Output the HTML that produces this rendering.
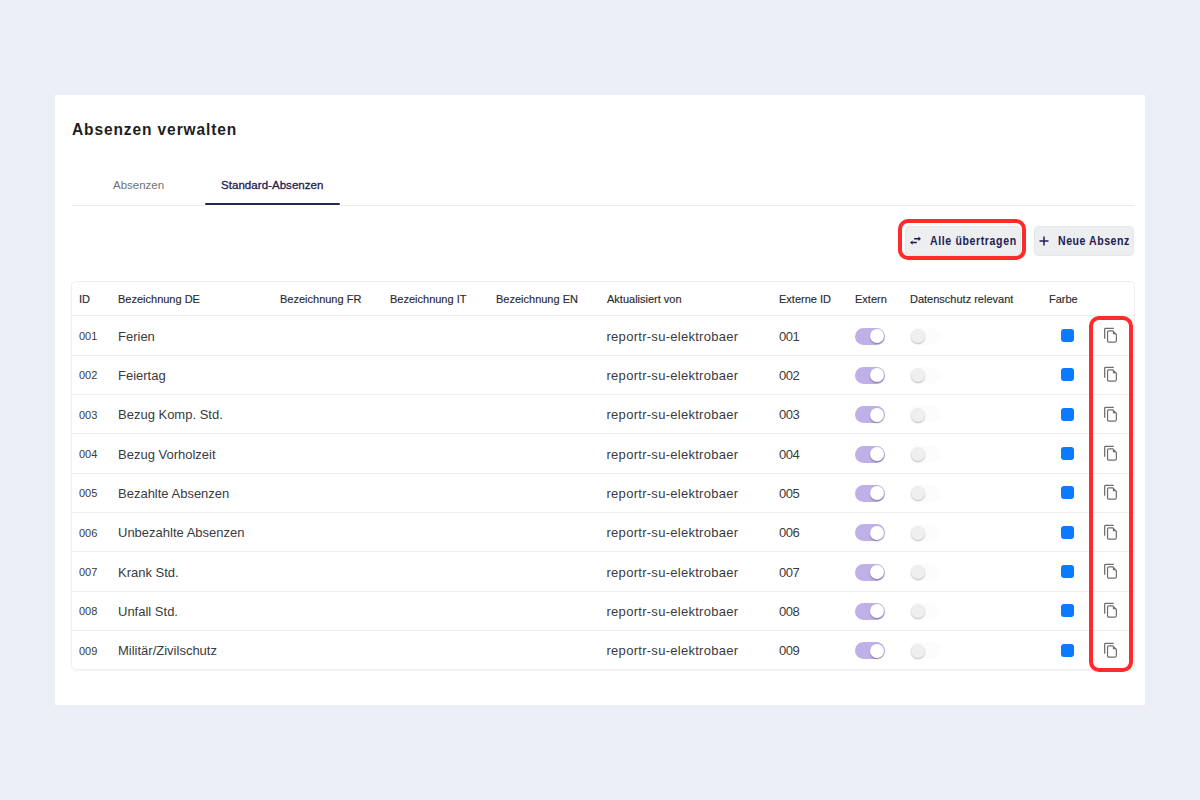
<!DOCTYPE html>
<html>
<head>
<meta charset="utf-8">
<style>
html,body{margin:0;padding:0;}
body{width:1200px;height:800px;background:#ECEFF7;font-family:"Liberation Sans",sans-serif;position:relative;overflow:hidden;}
.abs{position:absolute;}
.card{position:absolute;left:55px;top:95px;width:1090px;height:610px;background:#fff;}
.title{position:absolute;left:72px;top:118.5px;font-size:16.5px;font-weight:bold;color:#1d1e22;letter-spacing:0.95px;transform:scaleX(0.94);transform-origin:0 0;white-space:nowrap;line-height:20px;}
.tab{position:absolute;top:177px;font-size:11.5px;line-height:16px;white-space:nowrap;}
.tab1{left:113px;color:#707176;}
.tab2{left:221px;color:#1f2150;font-weight:normal;-webkit-text-stroke:0.3px #1f2150;letter-spacing:0.05px;}
.underline{position:absolute;left:205px;top:203px;width:134.5px;height:2px;background:#24274f;border-radius:1px;}
.divider{position:absolute;left:72px;top:205px;width:1063px;height:1px;background:#e9eaee;}
.btn{position:absolute;top:226px;height:30px;background:#edeef0;border-radius:5px;box-shadow:inset 0 0 0 1px #e4e6ea;}
.btntxt{position:absolute;top:7px;font-size:12px;font-weight:bold;color:#1e2150;line-height:16px;white-space:nowrap;letter-spacing:0.7px;transform:scaleX(0.88);transform-origin:0 0;}
.red{position:absolute;border:4.2px solid #ff2b2b;box-sizing:border-box;}
.tbl{position:absolute;left:71px;top:281px;width:1064px;height:389px;border:1px solid #efeff0;border-radius:5px;box-sizing:border-box;box-shadow:0 1px 1px rgba(0,0,0,0.04);}
.hline{position:absolute;left:72px;width:1062px;height:1px;background:#efeff0;}
.th{position:absolute;top:292px;font-size:11px;line-height:14px;color:#2a2b30;white-space:nowrap;-webkit-text-stroke:0.15px #2a2b30;}
.td{position:absolute;font-size:13px;line-height:16px;color:#3a3b40;white-space:nowrap;}
.tid{position:absolute;font-size:11px;line-height:14px;color:#3a3b44;white-space:nowrap;}
.tog{position:absolute;left:855px;width:30px;height:17px;border-radius:9px;background:#c0b0e8;}
.tog::after{content:"";position:absolute;left:15px;top:1.6px;width:13.8px;height:13.8px;border-radius:50%;background:#fff;box-shadow:0 1px 1.5px rgba(0,0,0,0.35);}
.togoff{position:absolute;left:910px;width:30px;height:17px;border-radius:9px;background:#fcfcfc;}
.togoff::after{content:"";position:absolute;left:1px;top:1.6px;width:13.8px;height:13.8px;border-radius:50%;background:#efefef;box-shadow:0 1px 1.5px rgba(0,0,0,0.25);}
.sq{position:absolute;left:1060.6px;width:13.2px;height:13.2px;border-radius:3px;background:#0a7bff;}
.cp{position:absolute;left:1100px;width:22px;height:22px;}
</style>
</head>
<body>
<div class="card"></div>
<div class="title">Absenzen verwalten</div>
<div class="tab tab1">Absenzen</div>
<div class="tab tab2">Standard-Absenzen</div>
<div class="underline"></div>
<div class="divider"></div>
<div class="abs" style="left:205px;top:205px;width:134.5px;height:1px;background:#fff"></div>

<div class="btn" style="left:905px;width:116px;">
  <svg class="abs" style="left:0;top:0" width="30" height="30" viewBox="0 0 30 30"><path d="M9.1 12.75H14M7.3 16.57H11.8" stroke="#1a1d4e" stroke-width="1.4" fill="none"/><path d="M13.4 10.55L15.95 12.75L13.4 14.95Z M7.6 14.4L5.05 16.57L7.6 18.75Z" fill="#1a1d4e"/></svg>
  <div class="btntxt" style="left:25px">Alle übertragen</div>
</div>
<div class="btn" style="left:1034px;width:100px;overflow:hidden;">
  <svg class="abs" style="left:5px;top:10px" width="10" height="10" viewBox="0 0 10 10"><path d="M5 0.5V9.5M0.5 5H9.5" stroke="#1e2150" stroke-width="1.5" fill="none"/></svg>
  <div class="btntxt" style="left:24px;letter-spacing:0.6px">Neue Absenz</div>
</div>
<div class="red" style="left:897.9px;top:219.3px;width:128.6px;height:40.8px;border-radius:10px;"></div>

<div class="tbl"></div>
<div class="hline" style="top:315px"></div>
<div class="th" style="left:79px">ID</div>
<div class="th" style="left:118px">Bezeichnung DE</div>
<div class="th" style="left:280px">Bezeichnung FR</div>
<div class="th" style="left:390px">Bezeichnung IT</div>
<div class="th" style="left:496px">Bezeichnung EN</div>
<div class="th" style="left:607px">Aktualisiert von</div>
<div class="th" style="left:779px">Externe ID</div>
<div class="th" style="left:855px">Extern</div>
<div class="th" style="left:910px">Datenschutz relevant</div>
<div class="th" style="left:1049px">Farbe</div>

<div class="tid" style="left:79px;top:329.06px">001</div>
<div class="td" style="left:118px;top:328.76px">Ferien</div>
<div class="td" style="left:606.5px;top:328.56px;letter-spacing:0.28px">reportr-su-elektrobaer</div>
<div class="td" style="left:779px;top:328.56px;letter-spacing:-0.5px">001</div>
<div class="tog" style="top:327.56px"></div>
<div class="togoff" style="top:327.56px"></div>
<div class="sq" style="top:328.87px"></div>
<svg class="cp" style="top:325.00px" width="22" height="22" viewBox="0 0 22 22"><path d="M4.68 13.75V4.3Q4.68 3.44 5.54 3.44H13.75" stroke="#6e6e6e" stroke-width="1.25" fill="none"/><path d="M8.75 5.9H12.9L16.35 9.35V15.85Q16.35 17.05 15.15 17.05H8.75Q7.55 17.05 7.55 15.85V7.1Q7.55 5.9 8.75 5.9Z" stroke="#6e6e6e" stroke-width="1.2" fill="none" stroke-linejoin="round"/><path d="M12.9 5.9V9.35H16.35Z" fill="#6e6e6e"/></svg>
<div class="hline" style="top:355px"></div>
<div class="tid" style="left:79px;top:368.39px">002</div>
<div class="td" style="left:118px;top:368.09px">Feiertag</div>
<div class="td" style="left:606.5px;top:367.89px;letter-spacing:0.28px">reportr-su-elektrobaer</div>
<div class="td" style="left:779px;top:367.89px;letter-spacing:-0.5px">002</div>
<div class="tog" style="top:366.89px"></div>
<div class="togoff" style="top:366.89px"></div>
<div class="sq" style="top:368.19px"></div>
<svg class="cp" style="top:364.32px" width="22" height="22" viewBox="0 0 22 22"><path d="M4.68 13.75V4.3Q4.68 3.44 5.54 3.44H13.75" stroke="#6e6e6e" stroke-width="1.25" fill="none"/><path d="M8.75 5.9H12.9L16.35 9.35V15.85Q16.35 17.05 15.15 17.05H8.75Q7.55 17.05 7.55 15.85V7.1Q7.55 5.9 8.75 5.9Z" stroke="#6e6e6e" stroke-width="1.2" fill="none" stroke-linejoin="round"/><path d="M12.9 5.9V9.35H16.35Z" fill="#6e6e6e"/></svg>
<div class="hline" style="top:394px"></div>
<div class="tid" style="left:79px;top:407.72px">003</div>
<div class="td" style="left:118px;top:407.42px">Bezug Komp. Std.</div>
<div class="td" style="left:606.5px;top:407.22px;letter-spacing:0.28px">reportr-su-elektrobaer</div>
<div class="td" style="left:779px;top:407.22px;letter-spacing:-0.5px">003</div>
<div class="tog" style="top:406.22px"></div>
<div class="togoff" style="top:406.22px"></div>
<div class="sq" style="top:407.52px"></div>
<svg class="cp" style="top:403.65px" width="22" height="22" viewBox="0 0 22 22"><path d="M4.68 13.75V4.3Q4.68 3.44 5.54 3.44H13.75" stroke="#6e6e6e" stroke-width="1.25" fill="none"/><path d="M8.75 5.9H12.9L16.35 9.35V15.85Q16.35 17.05 15.15 17.05H8.75Q7.55 17.05 7.55 15.85V7.1Q7.55 5.9 8.75 5.9Z" stroke="#6e6e6e" stroke-width="1.2" fill="none" stroke-linejoin="round"/><path d="M12.9 5.9V9.35H16.35Z" fill="#6e6e6e"/></svg>
<div class="hline" style="top:433px"></div>
<div class="tid" style="left:79px;top:447.06px">004</div>
<div class="td" style="left:118px;top:446.75px">Bezug Vorholzeit</div>
<div class="td" style="left:606.5px;top:446.56px;letter-spacing:0.28px">reportr-su-elektrobaer</div>
<div class="td" style="left:779px;top:446.56px;letter-spacing:-0.5px">004</div>
<div class="tog" style="top:445.56px"></div>
<div class="togoff" style="top:445.56px"></div>
<div class="sq" style="top:446.86px"></div>
<svg class="cp" style="top:442.99px" width="22" height="22" viewBox="0 0 22 22"><path d="M4.68 13.75V4.3Q4.68 3.44 5.54 3.44H13.75" stroke="#6e6e6e" stroke-width="1.25" fill="none"/><path d="M8.75 5.9H12.9L16.35 9.35V15.85Q16.35 17.05 15.15 17.05H8.75Q7.55 17.05 7.55 15.85V7.1Q7.55 5.9 8.75 5.9Z" stroke="#6e6e6e" stroke-width="1.2" fill="none" stroke-linejoin="round"/><path d="M12.9 5.9V9.35H16.35Z" fill="#6e6e6e"/></svg>
<div class="hline" style="top:473px"></div>
<div class="tid" style="left:79px;top:486.38px">005</div>
<div class="td" style="left:118px;top:486.08px">Bezahlte Absenzen</div>
<div class="td" style="left:606.5px;top:485.88px;letter-spacing:0.28px">reportr-su-elektrobaer</div>
<div class="td" style="left:779px;top:485.88px;letter-spacing:-0.5px">005</div>
<div class="tog" style="top:484.88px"></div>
<div class="togoff" style="top:484.88px"></div>
<div class="sq" style="top:486.19px"></div>
<svg class="cp" style="top:482.31px" width="22" height="22" viewBox="0 0 22 22"><path d="M4.68 13.75V4.3Q4.68 3.44 5.54 3.44H13.75" stroke="#6e6e6e" stroke-width="1.25" fill="none"/><path d="M8.75 5.9H12.9L16.35 9.35V15.85Q16.35 17.05 15.15 17.05H8.75Q7.55 17.05 7.55 15.85V7.1Q7.55 5.9 8.75 5.9Z" stroke="#6e6e6e" stroke-width="1.2" fill="none" stroke-linejoin="round"/><path d="M12.9 5.9V9.35H16.35Z" fill="#6e6e6e"/></svg>
<div class="hline" style="top:512px"></div>
<div class="tid" style="left:79px;top:525.71px">006</div>
<div class="td" style="left:118px;top:525.41px">Unbezahlte Absenzen</div>
<div class="td" style="left:606.5px;top:525.21px;letter-spacing:0.28px">reportr-su-elektrobaer</div>
<div class="td" style="left:779px;top:525.21px;letter-spacing:-0.5px">006</div>
<div class="tog" style="top:524.21px"></div>
<div class="togoff" style="top:524.21px"></div>
<div class="sq" style="top:525.51px"></div>
<svg class="cp" style="top:521.64px" width="22" height="22" viewBox="0 0 22 22"><path d="M4.68 13.75V4.3Q4.68 3.44 5.54 3.44H13.75" stroke="#6e6e6e" stroke-width="1.25" fill="none"/><path d="M8.75 5.9H12.9L16.35 9.35V15.85Q16.35 17.05 15.15 17.05H8.75Q7.55 17.05 7.55 15.85V7.1Q7.55 5.9 8.75 5.9Z" stroke="#6e6e6e" stroke-width="1.2" fill="none" stroke-linejoin="round"/><path d="M12.9 5.9V9.35H16.35Z" fill="#6e6e6e"/></svg>
<div class="hline" style="top:551px"></div>
<div class="tid" style="left:79px;top:565.04px">007</div>
<div class="td" style="left:118px;top:564.75px">Krank Std.</div>
<div class="td" style="left:606.5px;top:564.54px;letter-spacing:0.28px">reportr-su-elektrobaer</div>
<div class="td" style="left:779px;top:564.54px;letter-spacing:-0.5px">007</div>
<div class="tog" style="top:563.54px"></div>
<div class="togoff" style="top:563.54px"></div>
<div class="sq" style="top:564.84px"></div>
<svg class="cp" style="top:560.97px" width="22" height="22" viewBox="0 0 22 22"><path d="M4.68 13.75V4.3Q4.68 3.44 5.54 3.44H13.75" stroke="#6e6e6e" stroke-width="1.25" fill="none"/><path d="M8.75 5.9H12.9L16.35 9.35V15.85Q16.35 17.05 15.15 17.05H8.75Q7.55 17.05 7.55 15.85V7.1Q7.55 5.9 8.75 5.9Z" stroke="#6e6e6e" stroke-width="1.2" fill="none" stroke-linejoin="round"/><path d="M12.9 5.9V9.35H16.35Z" fill="#6e6e6e"/></svg>
<div class="hline" style="top:591px"></div>
<div class="tid" style="left:79px;top:604.38px">008</div>
<div class="td" style="left:118px;top:604.08px">Unfall Std.</div>
<div class="td" style="left:606.5px;top:603.88px;letter-spacing:0.28px">reportr-su-elektrobaer</div>
<div class="td" style="left:779px;top:603.88px;letter-spacing:-0.5px">008</div>
<div class="tog" style="top:602.88px"></div>
<div class="togoff" style="top:602.88px"></div>
<div class="sq" style="top:604.17px"></div>
<svg class="cp" style="top:600.30px" width="22" height="22" viewBox="0 0 22 22"><path d="M4.68 13.75V4.3Q4.68 3.44 5.54 3.44H13.75" stroke="#6e6e6e" stroke-width="1.25" fill="none"/><path d="M8.75 5.9H12.9L16.35 9.35V15.85Q16.35 17.05 15.15 17.05H8.75Q7.55 17.05 7.55 15.85V7.1Q7.55 5.9 8.75 5.9Z" stroke="#6e6e6e" stroke-width="1.2" fill="none" stroke-linejoin="round"/><path d="M12.9 5.9V9.35H16.35Z" fill="#6e6e6e"/></svg>
<div class="hline" style="top:630px"></div>
<div class="tid" style="left:79px;top:643.70px">009</div>
<div class="td" style="left:118px;top:643.40px">Militär/Zivilschutz</div>
<div class="td" style="left:606.5px;top:643.20px;letter-spacing:0.28px">reportr-su-elektrobaer</div>
<div class="td" style="left:779px;top:643.20px;letter-spacing:-0.5px">009</div>
<div class="tog" style="top:642.20px"></div>
<div class="togoff" style="top:642.20px"></div>
<div class="sq" style="top:643.50px"></div>
<svg class="cp" style="top:639.63px" width="22" height="22" viewBox="0 0 22 22"><path d="M4.68 13.75V4.3Q4.68 3.44 5.54 3.44H13.75" stroke="#6e6e6e" stroke-width="1.25" fill="none"/><path d="M8.75 5.9H12.9L16.35 9.35V15.85Q16.35 17.05 15.15 17.05H8.75Q7.55 17.05 7.55 15.85V7.1Q7.55 5.9 8.75 5.9Z" stroke="#6e6e6e" stroke-width="1.2" fill="none" stroke-linejoin="round"/><path d="M12.9 5.9V9.35H16.35Z" fill="#6e6e6e"/></svg>
<div class="red" style="left:1089.35px;top:315.85px;width:43.35px;height:356.2px;border-radius:10px;"></div>
</body>
</html>
